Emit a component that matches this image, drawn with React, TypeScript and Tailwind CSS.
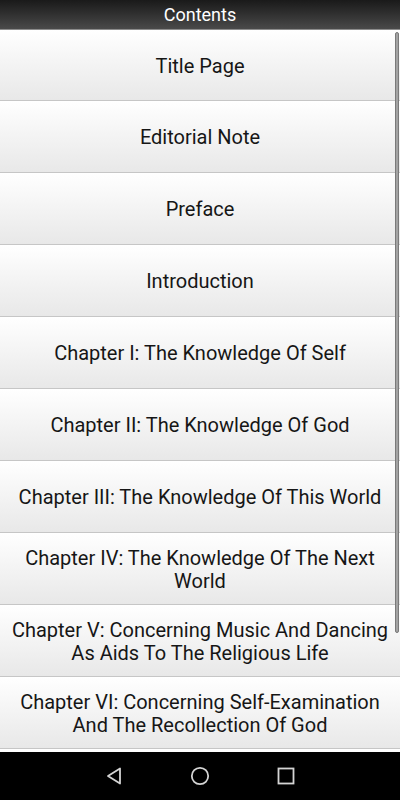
const chapters = [
  'Title Page',
  'Editorial Note',
  'Preface',
  'Introduction',
  'Chapter I: The Knowledge Of Self',
  'Chapter II: The Knowledge Of God',
  'Chapter III: The Knowledge Of This World',
  'Chapter IV: The Knowledge Of The Next World',
  'Chapter V: Concerning Music And Dancing As Aids To The Religious Life',
  'Chapter VI: Concerning Self-Examination And The Recollection Of God',
];

export default function App() {
  return (
    <div
      className="flex h-screen w-[400px] flex-col overflow-hidden bg-white"
      style={{ fontFamily: 'Roboto, "Noto Sans", sans-serif' }}
    >
      {/* Header */}
      <div className="flex h-[30px] shrink-0 items-center justify-center border-b border-[#8c8c8c] bg-gradient-to-b from-[#1a1a1a] to-[#4a4a4a]">
        <span className="text-[18px] leading-none text-white">Contents</span>
      </div>

      {/* List */}
      <div className="relative flex-1 overflow-hidden">
        {chapters.map((title, i) => (
          <div
            key={title}
            className={`flex items-center justify-center border-b border-[#c6c6c6] bg-gradient-to-b from-[#ffffff] to-[#e8e8e8] px-[10px] pt-[2px] text-center text-[20px] leading-[23px] text-[#161616] ${
              i === 0 ? 'h-[71px]' : 'h-[72px]'
            }`}
          >
            {title}
          </div>
        ))}
        {/* next item, only its top edge shows */}
        <div className="h-[72px] bg-gradient-to-b from-[#ffffff] to-[#e8e8e8]" />
        {/* scrollbar */}
        <div className="absolute right-[1px] top-[2px] h-[601px] w-[4px] rounded-full border border-[#7a7a7a] bg-[#a3a3a3]" />
      </div>

      {/* Nav bar */}
      <div className="flex h-[48px] shrink-0 items-center justify-center gap-[66px] bg-black">
        <svg width="20" height="20" viewBox="0 0 20 20" fill="none" stroke="#d4d4d4" strokeWidth="1.8" strokeLinejoin="round">
          <path d="M4 10 L16 2.5 L16 17.5 Z" />
        </svg>
        <svg width="20" height="20" viewBox="0 0 20 20" fill="none" stroke="#d4d4d4" strokeWidth="1.8">
          <circle cx="10" cy="10" r="8.2" />
        </svg>
        <svg width="20" height="20" viewBox="0 0 20 20" fill="none" stroke="#d4d4d4" strokeWidth="1.8">
          <rect x="2.5" y="2.5" width="15" height="15" />
        </svg>
      </div>
    </div>
  );
}
